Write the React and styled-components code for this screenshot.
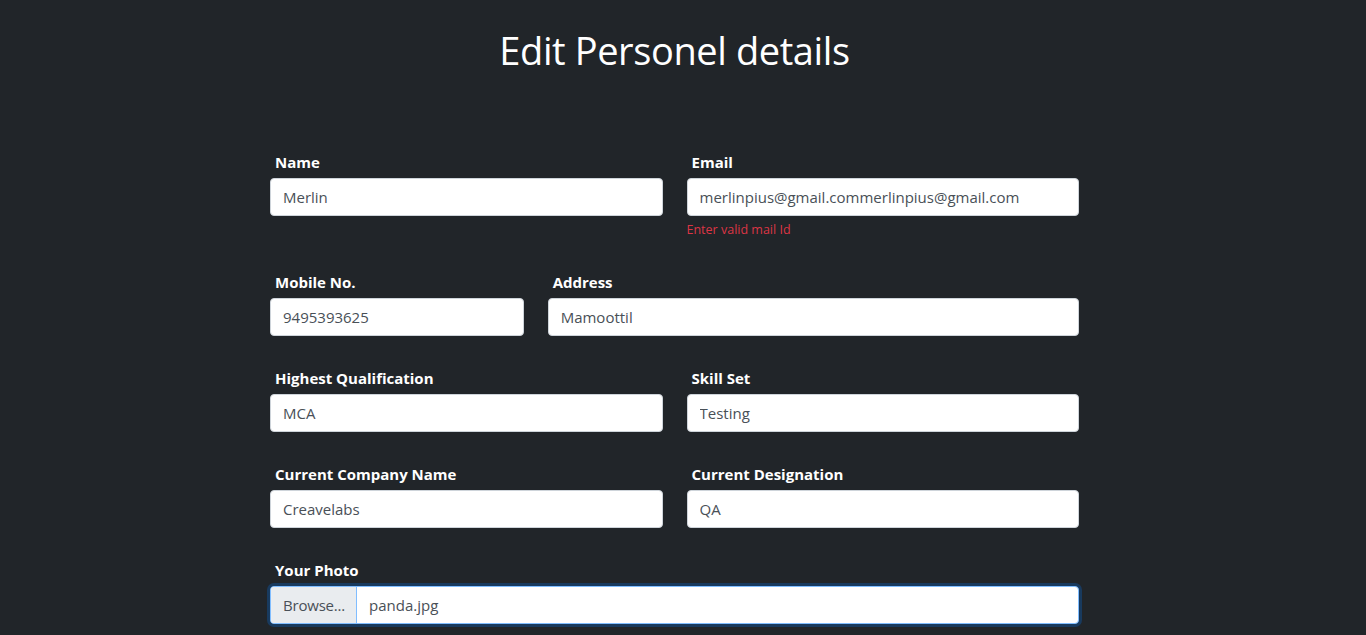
import React from "react";
import styled, { createGlobalStyle } from "styled-components";

const GlobalStyle = createGlobalStyle`
  html, body {
    margin: 0;
    padding: 0;
    background: #212529;
    overflow: hidden;
  }
  * {
    box-sizing: border-box;
  }
`;

const Page = styled.div`
  min-height: 635px;
  padding: 26px 17px 40px 0;
  background: #212529;
  font-family: "Open Sans", "Noto Sans", sans-serif;
  color: #fff;
`;

const Title = styled.h1`
  margin: 0;
  text-align: center;
  font-size: 38px;
  font-weight: 400;
  line-height: 48px;
  letter-spacing: -0.4px;
  color: #fff;
`;

const Form = styled.form`
  width: 809px;
  margin: 76px auto 0;
  display: flex;
  flex-direction: column;
  gap: 30px;
`;

const Row = styled.div`
  display: grid;
  grid-template-columns: ${(props) => props.cols || "1fr 1fr"};
  column-gap: 24px;
  align-items: start;
`;

const Group = styled.div`
  display: flex;
  flex-direction: column;
`;

const Label = styled.label`
  padding-left: 5px;
  margin-bottom: 4px;
  font-size: 15px;
  font-weight: 700;
  line-height: 24px;
  color: #fff;
`;

const Input = styled.input`
  height: 38px;
  width: 100%;
  padding: 6px 12px;
  font-family: inherit;
  font-size: 15px;
  line-height: 24px;
  color: #495057;
  background: #fff;
  border: 1px solid #ced4da;
  border-radius: 4px;
  outline: none;
`;

const Error = styled.small`
  margin-top: 4px;
  font-size: 12.5px;
  line-height: 20px;
  color: #dc3545;
`;

const FileBox = styled.div`
  display: flex;
  height: 38px;
  border: 1px solid #80bdff;
  border-radius: 4px;
  background: #fff;
  box-shadow: 0 0 0 3px rgba(0, 123, 255, 0.25);
  overflow: hidden;
`;

const Browse = styled.span`
  display: flex;
  align-items: center;
  padding: 0 11px 0 12px;
  background: #e9ecef;
  border-right: 1px solid #80bdff;
  font-size: 15px;
  letter-spacing: -0.2px;
  color: #495057;
`;

const FileName = styled.span`
  display: flex;
  align-items: center;
  padding: 0 12px;
  font-size: 15px;
  color: #495057;
`;

const Field = ({ label, value, error }) => (
  <Group>
    <Label>{label}</Label>
    <Input defaultValue={value} />
    {error && <Error>{error}</Error>}
  </Group>
);

const App = () => {
  return (
    <>
      <GlobalStyle />
      <Page>
        <Title>Edit Personel details</Title>
        <Form>
          <Row>
            <Field label="Name" value="Merlin" />
            <Field
              label="Email"
              value="merlinpius@gmail.commerlinpius@gmail.com"
              error="Enter valid mail Id"
            />
          </Row>
          <Row cols="calc((100% + 24px) / 3 - 24px) 1fr">
            <Field label="Mobile No." value="9495393625" />
            <Field label="Address" value="Mamoottil" />
          </Row>
          <Row>
            <Field label="Highest Qualification" value="MCA" />
            <Field label="Skill Set" value="Testing" />
          </Row>
          <Row>
            <Field label="Current Company Name" value="Creavelabs" />
            <Field label="Current Designation" value="QA" />
          </Row>
          <Group>
            <Label>Your Photo</Label>
            <FileBox>
              <Browse>Browse...</Browse>
              <FileName>panda.jpg</FileName>
            </FileBox>
          </Group>
        </Form>
      </Page>
    </>
  );
};

export default App;
